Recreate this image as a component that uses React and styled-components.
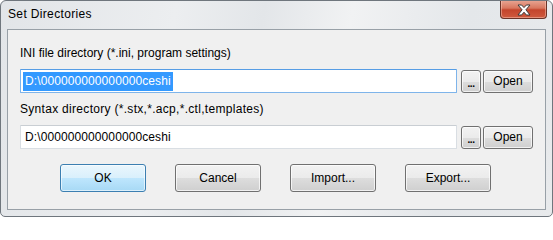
import React from 'react';
import styled, { createGlobalStyle } from 'styled-components';

const GlobalStyle = createGlobalStyle`
  html, body {
    margin: 0;
    padding: 0;
    background: #ffffff;
  }
  * {
    box-sizing: border-box;
  }
`;

const Window = styled.div`
  width: 553px;
  height: 217px;
  display: flex;
  flex-direction: column;
  border: 1px solid #6f767d;
  border-radius: 6px 6px 5px 5px;
  background: linear-gradient(100deg, #e2e5e8 0%, #eceef0 30%, #e3e6e9 45%, #f1f2f3 60%, #e4e7ea 80%, #e8eaec 100%);
  font-family: "Liberation Sans", "Noto Sans", sans-serif;
  font-size: 12px;
  color: #000;
  overflow: hidden;
`;

const TitleBar = styled.div`
  height: 28px;
  display: flex;
  justify-content: space-between;
  align-items: flex-start;
  padding-left: 7px;
`;

const Title = styled.span`
  margin-top: 6px;
  line-height: 15px;
  font-size: 12px;
  letter-spacing: 0.35px;
`;

const CloseButton = styled.div`
  width: 47px;
  height: 19px;
  margin-top: -1px;
  margin-right: 5px;
  display: flex;
  align-items: center;
  justify-content: center;
  padding-top: 2px;
  border: 1px solid #6a3328;
  border-top: none;
  border-radius: 0 0 4px 4px;
  background: linear-gradient(to bottom, #e9a896 0%, #d8775f 45%, #c4452c 55%, #cf5a3f 100%);
  box-shadow: inset 0 0 0 1px rgba(255, 210, 195, 0.45);
`;

const Client = styled.div`
  flex: 1;
  margin: 0 6px 6px 6px;
  border: 1px solid #98a0a7;
  background: #f0f0f0;
  padding: 16px 12px 0 12px;
  display: flex;
  flex-direction: column;
`;

const Label = styled.div`
  line-height: 15px;
  margin-top: ${props => props.first ? '0' : '9px'};
  letter-spacing: ${props => props.spacing || 0}px;
`;

const PathRow = styled.div`
  display: flex;
  align-items: center;
  margin-top: 8px;
`;

const Field = styled.div`
  width: 437px;
  height: 24px;
  padding: 1px 0 0 2px;
  display: flex;
  align-items: center;
  background: #ffffff;
  border: 1px solid ${props => props.focused ? '#7eb4ea' : '#d9dee3'};
  border-top-color: ${props => props.focused ? '#569de5' : '#c9ced3'};
  border-radius: 1px;
  white-space: nowrap;
`;

const FieldText = styled.span`
  padding: 2px;
  line-height: 15px;
  letter-spacing: 0.1px;
  background: ${props => props.selected ? '#3399ff' : 'transparent'};
  color: ${props => props.selected ? '#ffffff' : '#000000'};
`;

const Button = styled.button`
  font-family: inherit;
  font-size: 12px;
  color: #000;
  padding: 0;
  width: ${props => props.width}px;
  height: ${props => props.height}px;
  margin-left: ${props => props.gap || 0}px;
  border: 1px solid ${props => props.primary ? '#3c7fb1' : '#707070'};
  border-radius: 3px;
  background: ${props => props.primary
    ? 'linear-gradient(to bottom, #eaf6fd 0%, #d9f0fc 50%, #bee6fd 51%, #a7d9f5 100%)'
    : 'linear-gradient(to bottom, #f2f2f2 0%, #ebebeb 50%, #dddddd 51%, #cfcfcf 100%)'};
  box-shadow: inset 0 0 0 1px ${props => props.primary ? 'rgba(255,255,255,0.6)' : 'rgba(255,255,255,0.7)'};
  line-height: 1;
`;

const Dots = styled.span`
  display: inline-block;
  font-size: 10px;
  font-weight: bold;
  letter-spacing: -0.5px;
  padding-top: 6px;
`;

const ButtonBar = styled.div`
  display: flex;
  justify-content: center;
  gap: 29px;
  margin-top: 15px;
  padding-right: 2px;
`;

function CloseGlyph() {
  return (
    <svg width="14" height="12" viewBox="0 0 14 12">
      <polygon
        points="1,1 4.6,1 7,3.6 9.4,1 13,1 8.9,5.8 13,11 9.4,11 7,8.2 4.6,11 1,11 5.1,5.8"
        fill="#ffffff"
        stroke="#3a3a3a"
        strokeWidth="1"
        strokeLinejoin="round"
      />
    </svg>
  );
}

function PathSetting({ label, value, focused, first, spacing }) {
  return (
    <>
      <Label first={first} spacing={spacing}>{label}</Label>
      <PathRow>
        <Field focused={focused}>
          <FieldText selected={focused}>{value}</FieldText>
        </Field>
        <Button width={20} height={23} gap={4}><Dots>...</Dots></Button>
        <Button width={50} height={23} gap={2}>Open</Button>
      </PathRow>
    </>
  );
}

export default function App() {
  const path = 'D:\\000000000000000ceshi';
  return (
    <>
      <GlobalStyle />
      <Window>
        <TitleBar>
          <Title>Set Directories</Title>
          <CloseButton><CloseGlyph /></CloseButton>
        </TitleBar>
        <Client>
          <PathSetting first focused label="INI file directory (*.ini, program settings)" value={path} />
          <PathSetting spacing={0.3} label="Syntax directory (*.stx,*.acp,*.ctl,templates)" value={path} />
          <ButtonBar>
            <Button primary width={86} height={28}>OK</Button>
            <Button width={86} height={28}>Cancel</Button>
            <Button width={86} height={28}>Import...</Button>
            <Button width={86} height={28}>Export...</Button>
          </ButtonBar>
        </Client>
      </Window>
    </>
  );
}
